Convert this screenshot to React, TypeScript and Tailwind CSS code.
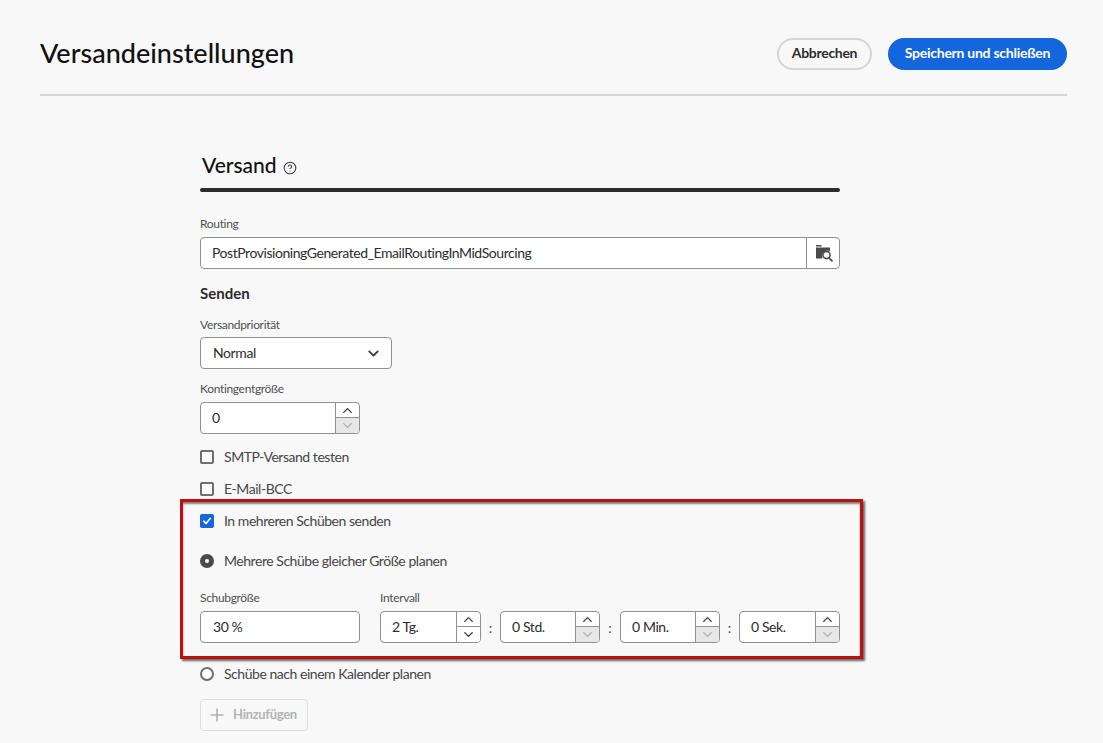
import React from 'react';
import { ChevronDown, ChevronUp, CircleHelp, Plus } from 'lucide-react';

const fontClass = "font-['Lato',sans-serif]";

const Label: React.FC<{ children: React.ReactNode; className?: string }> = ({ children, className = '' }) => (
  <div className={`text-[12px] leading-[16px] tracking-[-0.33px] text-[#505050] ${className}`}>{children}</div>
);

const FolderSearch = () => (
  <svg width="18" height="18" viewBox="0 0 18 18" fill="none">
    <path d="M1 1h5l1 1.5H1z" fill="#4b4b4b" />
    <path d="M1 3.4h14v4a5.4 5.4 0 0 0-7.4 7.2H1z" fill="#4b4b4b" />
    <circle cx="11.5" cy="11" r="3.6" stroke="#4b4b4b" strokeWidth="1.6" />
    <path d="M14 13.8l3 3" stroke="#4b4b4b" strokeWidth="1.8" strokeLinecap="round" />
  </svg>
);

const Stepper: React.FC<{ value: string; width: string; downDisabled?: boolean }> = ({ value, width, downDisabled }) => (
  <div className={`flex h-[32px] ${width} overflow-hidden rounded-[4px] border border-[#909090] bg-white`}>
    <div className="flex min-w-0 flex-1 items-center pb-[2px] pl-[11px] text-[14px] tracking-[-0.4px] text-[#2c2c2c]">{value}</div>
    <div className="flex w-[24px] flex-col border-l border-[#909090]">
      <div className="flex h-[15px] items-center justify-center border-b border-[#909090]">
        <ChevronUp size={15} strokeWidth={2.2} className="text-[#3c3c3c]" />
      </div>
      <div className={`flex flex-1 items-center justify-center ${downDisabled ? 'bg-[#e6e6e6]' : 'bg-white'}`}>
        <ChevronDown size={15} strokeWidth={2.2} className={downDisabled ? 'text-[#b0b0b0]' : 'text-[#3c3c3c]'} />
      </div>
    </div>
  </div>
);

const Checkbox: React.FC<{ label: string; checked?: boolean; className?: string }> = ({ label, checked, className = '' }) => (
  <div className={`flex h-[20px] items-center gap-[10px] ${className}`}>
    {checked ? (
      <span className="flex h-[14px] w-[14px] items-center justify-center rounded-[2px] bg-[#1366dc]">
        <svg width="10" height="10" viewBox="0 0 10 10" fill="none">
          <path d="M1.8 5.2l2.2 2.3 4.2-5" stroke="white" strokeWidth="1.7" strokeLinecap="round" strokeLinejoin="round" />
        </svg>
      </span>
    ) : (
      <span className="h-[14px] w-[14px] rounded-[2px] border-2 border-[#6e6e6e] bg-white" />
    )}
    <span className="pb-[2px] text-[14px] tracking-[-0.46px] text-[#464646]">{label}</span>
  </div>
);

const Radio: React.FC<{ label: string; checked?: boolean; className?: string }> = ({ label, checked, className = '' }) => (
  <div className={`flex h-[20px] items-center gap-[10px] ${className}`}>
    {checked ? (
      <span className="flex h-[14px] w-[14px] items-center justify-center rounded-full bg-[#4b4b4b]">
        <span className="h-[4px] w-[4px] rounded-full bg-white" />
      </span>
    ) : (
      <span className="h-[14px] w-[14px] rounded-full border-2 border-[#6e6e6e] bg-white" />
    )}
    <span className="pb-[2px] text-[14px] tracking-[-0.46px] text-[#464646]">{label}</span>
  </div>
);

const Separator: React.FC<{ width: string }> = ({ width }) => (
  <span className={`${width} text-center text-[14px] text-[#464646]`}>:</span>
);

const App: React.FC = () => {
  return (
    <div className={`relative h-[743px] overflow-hidden bg-[#f8f8f8] ${fontClass}`}>
      <header className="mx-[36px] ml-[40px] flex items-center justify-between border-b-2 border-[#d5d5d5] pb-[24px] pt-[38px]">
        <h1 className="pb-[2px] text-[27px] font-medium leading-[30px] text-[#111111]">Versandeinstellungen</h1>
        <div className="flex items-center gap-[16px]">
          <button className="flex h-[32px] w-[95px] items-center justify-center rounded-full border-2 border-[#d5d5d5] pb-[3px] text-[14px] font-bold tracking-[-0.3px] text-[#2c2c2c]">
            Abbrechen
          </button>
          <button className="flex h-[32px] w-[179px] items-center justify-center rounded-full bg-[#1366dc] pb-[3px] text-[14px] font-bold tracking-[-0.26px] text-white">
            Speichern und schließen
          </button>
        </div>
      </header>

      <main className="ml-[200px] w-[640px]">
        <div className="mt-[55px] flex items-center gap-[6px] pl-[2px]">
          <h2 className="pb-[2px] text-[21px] font-medium leading-[28px] text-[#111111]">Versand</h2>
          <CircleHelp size={14} strokeWidth={1.8} className="mt-[4px] text-[#3c3c3c]" />
        </div>
        <div className="mt-[7px] h-[4px] rounded-full bg-[#2c2c2c]" />

        <Label className="mt-[24px]">Routing</Label>
        <div className="mt-[5px] flex h-[32px] overflow-hidden rounded-[4px] border border-[#909090] bg-white">
          <div className="flex flex-1 items-center pb-[2px] pl-[11px] text-[14px] tracking-[-0.45px] text-[#2c2c2c]">
            PostProvisioningGenerated_EmailRoutingInMidSourcing
          </div>
          <div className="flex w-[33px] items-center justify-center border-l border-[#909090] pl-[1px]">
            <FolderSearch />
          </div>
        </div>

        <h3 className="mt-[15px] pb-[2px] text-[15px] font-bold leading-[18px] text-[#2c2c2c]">Senden</h3>

        <Label className="mt-[13px]">Versandpriorität</Label>
        <div className="mt-[4px] flex h-[32px] w-[192px] items-center justify-between rounded-[4px] border border-[#909090] bg-white pl-[12px] pr-[9px]">
          <span className="pb-[2px] text-[14px] tracking-[-0.4px] text-[#2c2c2c]">Normal</span>
          <ChevronDown size={17} strokeWidth={2.6} className="text-[#3c3c3c]" />
        </div>

        <Label className="mt-[12px]">Kontingentgröße</Label>
        <div className="mt-[5px]">
          <Stepper value="0" width="w-[160px]" downDisabled />
        </div>

        <Checkbox label="SMTP-Versand testen" className="mt-[13px]" />
        <Checkbox label="E-Mail-BCC" className="mt-[12px]" />
        <Checkbox label="In mehreren Schüben senden" checked className="mt-[12px]" />
        <Radio label="Mehrere Schübe gleicher Größe planen" checked className="mt-[20px]" />

        <div className="mt-[19px] flex gap-[20px]">
          <div>
            <Label>Schubgröße</Label>
            <div className="mt-[5px] flex h-[32px] w-[160px] items-center rounded-[4px] border border-[#909090] bg-white pb-[2px] pl-[12px] text-[14px] tracking-[-0.4px] text-[#2c2c2c]">
              30 %
            </div>
          </div>
          <div>
            <Label>Intervall</Label>
            <div className="mt-[5px] flex items-center">
              <Stepper value="2 Tg." width="w-[101px]" />
              <Separator width="w-[19px]" />
              <Stepper value="0 Std." width="w-[100px]" downDisabled />
              <Separator width="w-[20px]" />
              <Stepper value="0 Min." width="w-[100px]" downDisabled />
              <Separator width="w-[19px]" />
              <Stepper value="0 Sek." width="w-[101px]" downDisabled />
            </div>
          </div>
        </div>

        <Radio label="Schübe nach einem Kalender planen" className="mt-[21px]" />

        <button className="mt-[15px] flex h-[32px] w-[108px] items-center gap-[6px] rounded-[4px] border border-[#dcdcdc] pb-[1px] pl-[6px] text-[13px] font-bold tracking-[-0.3px] text-[#b3b3b3]">
          <Plus size={20} strokeWidth={2} className="text-[#b3b3b3]" />
          Hinzufügen
        </button>
      </main>

      {/* annotation frame from the docs screenshot */}
      <div className="pointer-events-none absolute left-[180px] top-[499px] h-[160px] w-[683px] border-[3px] border-[#bd0f0b] shadow-[2px_2px_2px_#666666,inset_0_2px_2px_#808080]" />
    </div>
  );
};

export default App;
